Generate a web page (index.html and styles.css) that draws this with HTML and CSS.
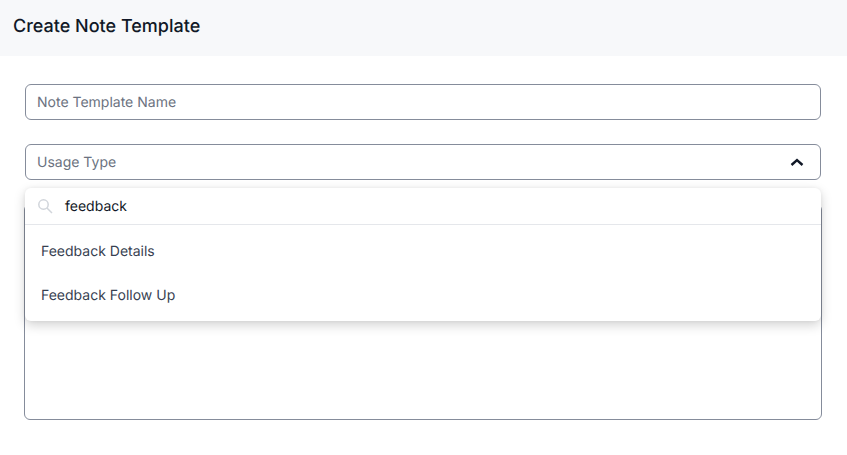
FILE: index.html
```html
<!DOCTYPE html>
<html lang="en">
<head>
<meta charset="utf-8">
<title>Create Note Template</title>
<link rel="stylesheet" href="styles.css">
</head>
<body>
<header class="header"><h1 class="title">Create Note Template</h1></header>
<main class="form">
  <div class="field"><span class="placeholder">Note Template Name</span></div>
  <div class="select-wrap">
    <div class="field">
      <span class="placeholder">Usage Type</span>
      <svg class="chevron" width="14" height="14" viewBox="0 0 14 14" aria-hidden="true"><path d="M1.500 10 7 5l5.500 5" fill="none" stroke="#111827" stroke-width="2.400"/></svg>
    </div>
    <div class="menu">
      <div class="search">
        <svg class="search-icon" width="16" height="16" viewBox="0 0 16 16" aria-hidden="true"><circle cx="6.500" cy="6.500" r="4.700" fill="none" stroke="#d1d5db" stroke-width="1.500"/><path d="m10 10 5 5" stroke="#d1d5db" stroke-width="1.500" fill="none"/></svg>
        <span class="query">feedback</span>
      </div>
      <ul class="options">
        <li class="option">Feedback Details</li>
        <li class="option">Feedback Follow Up</li>
      </ul>
    </div>
  </div>
  <div class="editor"></div>
</main>
</body>
</html>
```
FILE: styles.css
```css
* { box-sizing: border-box; }
html, body { margin: 0; padding: 0; }
body { background: #fff; font-family: Inter, "Liberation Sans", sans-serif; text-rendering: geometricPrecision; width: 847px; height: 455px; overflow: hidden; }
.header { height: 56px; background: #f7f8fa; padding: 0 13px 2px; display: flex; align-items: center; }
.title { margin: 0; font-size: 18px; font-weight: 500; line-height: 24px; color: #111827; }
.form { padding: 28px 26px 0 25px; display: flex; flex-direction: column; gap: 24px; }
.field { height: 36px; border: 1px solid #858c9b; border-radius: 6px; padding: 0 16px 0 11px; display: flex; align-items: center; justify-content: space-between; background: #fff; }
.placeholder { font-size: 14px; color: #6b7280; line-height: 20px; padding-top: 2px; }
.select-wrap { position: relative; }
.chevron { display: block; }
.menu { position: absolute; top: 44px; left: 0; right: 0; height: 133px; background: #fff; border-radius: 6px; box-shadow: 0 4px 12px rgba(0,0,0,.18), 0 0 4px rgba(0,0,0,.05); z-index: 2; }
.search { height: 37px; border-bottom: 1px solid #e5e7eb; display: flex; align-items: center; padding-left: 12px; gap: 12px; }
.search-icon { display: block; }
.query { font-size: 14px; color: #111827; line-height: 20px; padding-top: 2px; }
.options { list-style: none; margin: 0; padding: 4px 0 0; }
.option { height: 44px; padding-left: 16px; font-size: 14px; line-height: 46px; color: #374151; }
.editor { height: 216px; margin: 0 -1px; border: 1px solid #858c9b; border-radius: 6px; }
```
